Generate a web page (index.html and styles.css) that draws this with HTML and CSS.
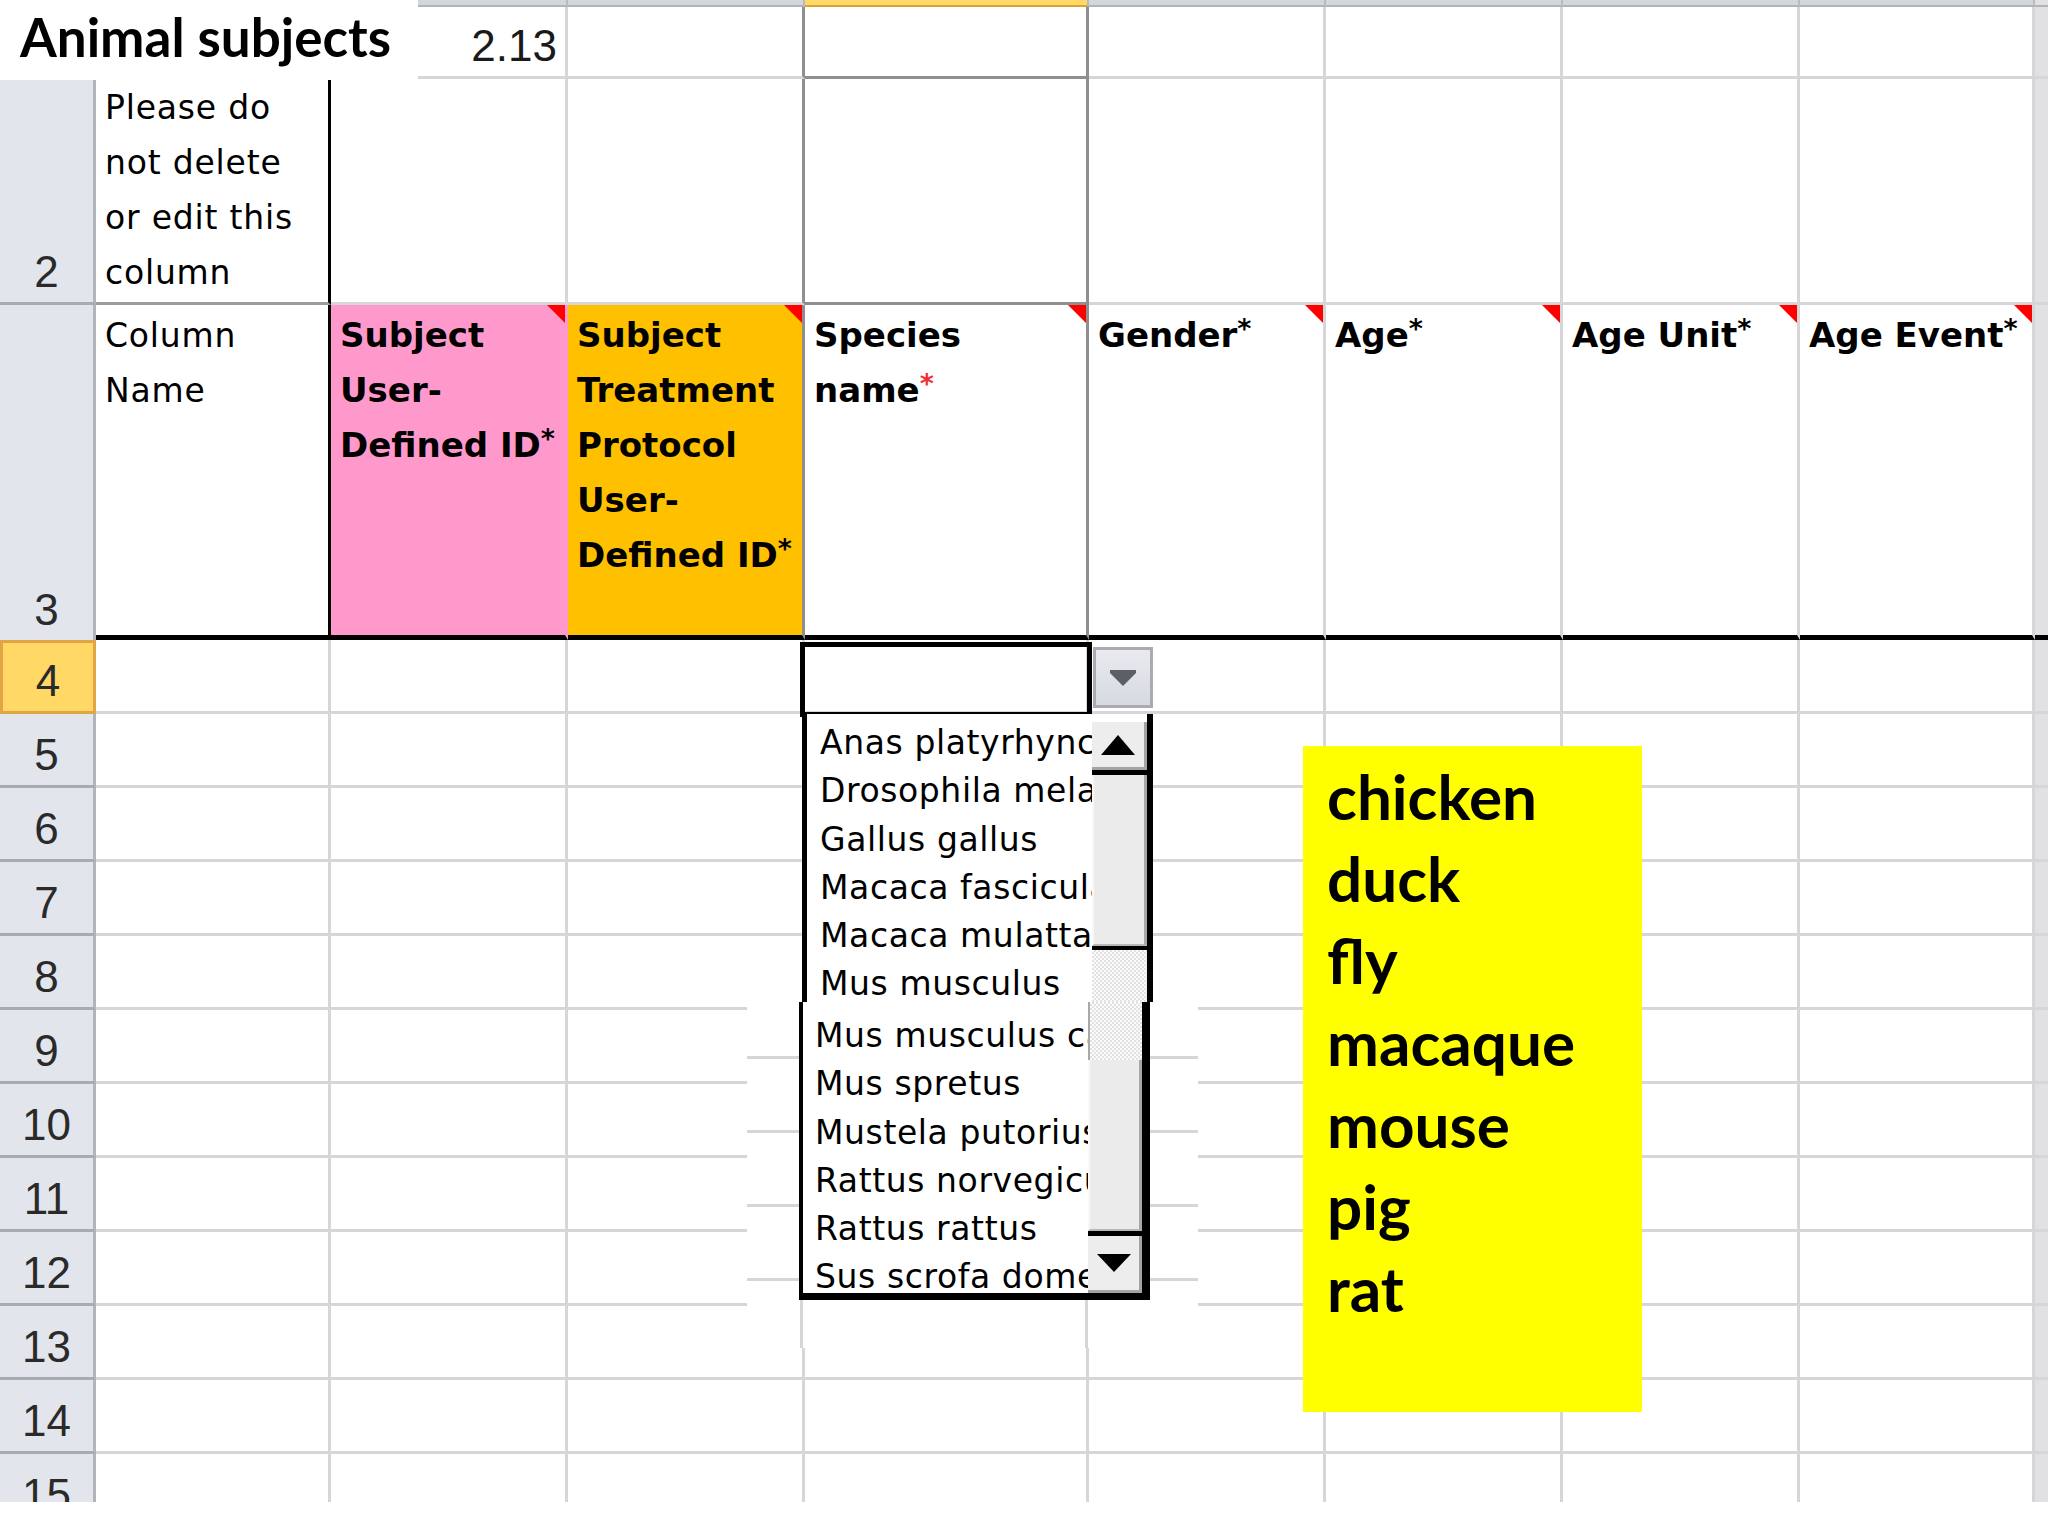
FILE: index.html
```html
<!DOCTYPE html>
<html lang="en">
<head>
    <meta charset="UTF-8">
    <title>Animal subjects</title>
    <link rel="stylesheet" href="styles.css">
</head>
<body>
    <div class="sheet">
        <!-- column letter strip (cut off at the top) -->
        <div class="row colbar">
            <div class="cb"></div><div class="cb"></div><div class="cb"></div><div class="cb"></div>
            <div class="cb sel"></div><div class="cb"></div><div class="cb"></div><div class="cb"></div>
            <div class="cb"></div><div class="cb edge"></div>
        </div>

        <div class="row r1">
            <div class="rh"></div>
            <div class="c"></div>
            <div class="c num">2.13</div>
            <div class="c cedge"></div>
            <div class="c dcol dtop"></div>
            <div class="c"></div><div class="c"></div><div class="c"></div><div class="c"></div>
            <div class="c edge"></div>
        </div>

        <div class="row r2">
            <div class="rh dk">2</div>
            <div class="c blk dk txt bottom">Please do<br>not delete<br>or edit this<br>column</div>
            <div class="c"></div>
            <div class="c cedge"></div>
            <div class="c dcol dtop"></div>
            <div class="c"></div><div class="c"></div><div class="c"></div><div class="c"></div>
            <div class="c edge"></div>
        </div>

        <div class="row r3">
            <div class="rh">3</div>
            <div class="c blk txt">Column<br>Name</div>
            <div class="c txt hd pink flag">Subject<br>User-<br>Defined ID<span class="ast">*</span></div>
            <div class="c txt hd orange cedge flag">Subject<br>Treatment<br>Protocol<br>User-<br>Defined ID<span class="ast">*</span></div>
            <div class="c txt hd dcol flag">Species<br>name<span class="ast red">*</span></div>
            <div class="c txt hd flag">Gender<span class="ast">*</span></div>
            <div class="c txt hd flag">Age<span class="ast">*</span></div>
            <div class="c txt hd flag">Age Unit<span class="ast">*</span></div>
            <div class="c txt hd flag">Age Event<span class="ast">*</span></div>
            <div class="c edge"></div>
        </div>

        <div class="row"><div class="rh on">4</div><div class="c"></div><div class="c"></div><div class="c"></div><div class="c"></div><div class="c"></div><div class="c"></div><div class="c"></div><div class="c"></div><div class="c edge"></div></div>
        <div class="row"><div class="rh">5</div><div class="c"></div><div class="c"></div><div class="c"></div><div class="c"></div><div class="c"></div><div class="c"></div><div class="c"></div><div class="c"></div><div class="c edge"></div></div>
        <div class="row"><div class="rh">6</div><div class="c"></div><div class="c"></div><div class="c"></div><div class="c"></div><div class="c"></div><div class="c"></div><div class="c"></div><div class="c"></div><div class="c edge"></div></div>
        <div class="row"><div class="rh">7</div><div class="c"></div><div class="c"></div><div class="c"></div><div class="c"></div><div class="c"></div><div class="c"></div><div class="c"></div><div class="c"></div><div class="c edge"></div></div>
        <div class="row"><div class="rh">8</div><div class="c"></div><div class="c"></div><div class="c"></div><div class="c"></div><div class="c"></div><div class="c"></div><div class="c"></div><div class="c"></div><div class="c edge"></div></div>
        <div class="row"><div class="rh">9</div><div class="c"></div><div class="c"></div><div class="c"></div><div class="c"></div><div class="c"></div><div class="c"></div><div class="c"></div><div class="c"></div><div class="c edge"></div></div>
        <div class="row"><div class="rh">10</div><div class="c"></div><div class="c"></div><div class="c"></div><div class="c"></div><div class="c"></div><div class="c"></div><div class="c"></div><div class="c"></div><div class="c edge"></div></div>
        <div class="row"><div class="rh">11</div><div class="c"></div><div class="c"></div><div class="c"></div><div class="c"></div><div class="c"></div><div class="c"></div><div class="c"></div><div class="c"></div><div class="c edge"></div></div>
        <div class="row"><div class="rh">12</div><div class="c"></div><div class="c"></div><div class="c"></div><div class="c"></div><div class="c"></div><div class="c"></div><div class="c"></div><div class="c"></div><div class="c edge"></div></div>
        <div class="row"><div class="rh">13</div><div class="c"></div><div class="c"></div><div class="c"></div><div class="c"></div><div class="c"></div><div class="c"></div><div class="c"></div><div class="c"></div><div class="c edge"></div></div>
        <div class="row"><div class="rh">14</div><div class="c"></div><div class="c"></div><div class="c"></div><div class="c"></div><div class="c"></div><div class="c"></div><div class="c"></div><div class="c"></div><div class="c edge"></div></div>
        <div class="row"><div class="rh">15</div><div class="c"></div><div class="c"></div><div class="c"></div><div class="c"></div><div class="c"></div><div class="c"></div><div class="c"></div><div class="c"></div><div class="c edge"></div></div>

        <!-- overlays -->
        <div class="title">Animal subjects</div>

        <div class="select-box"></div>
        <div class="dd-btn">
            <svg width="26" height="16" viewBox="0 0 26 16"><polygon points="0,0 26,0 26,3 13,16 0,3" fill="#5c5f66"/></svg>
        </div>

        <div class="patch"></div>

        <div class="list list-a">
            <div class="items">
                <div>Anas platyrhynchos</div>
                <div>Drosophila melanogaster</div>
                <div>Gallus gallus</div>
                <div>Macaca fascicularis</div>
                <div>Macaca mulatta</div>
                <div>Mus musculus</div>
            </div>
            <div class="sbar">
                <div class="sb-btn up">
                    <svg width="34" height="20" viewBox="0 0 34 20"><polygon points="0,20 17,0 34,20" fill="#000"/></svg>
                </div>
                <div class="sb-line"></div>
                <div class="sb-thumb tall"></div>
                <div class="sb-line thin"></div>
                <div class="sb-track"></div>
            </div>
        </div>

        <div class="list list-b">
            <div class="items">
                <div>Mus musculus castaneus</div>
                <div>Mus spretus</div>
                <div>Mustela putorius furo</div>
                <div>Rattus norvegicus</div>
                <div>Rattus rattus</div>
                <div>Sus scrofa domesticus</div>
            </div>
            <div class="sbar">
                <div class="sb-track short"></div>
                <div class="sb-thumb"></div>
                <div class="sb-line"></div>
                <div class="sb-btn down">
                    <svg width="34" height="18" viewBox="0 0 34 18"><polygon points="0,0 34,0 17,18" fill="#000"/></svg>
                </div>
            </div>
        </div>

        <div class="note">chicken<br>duck<br>fly<br>macaque<br>mouse<br>pig<br>rat</div>
    </div>
</body>
</html>
```

FILE: styles.css
```css
* {
    box-sizing: border-box;
}

body {
    margin: 0;
    background: #fff;
}

.sheet {
    position: relative;
    width: 2048px;
    height: 1502px;
    overflow: hidden;
    font-family: "DejaVu Sans", sans-serif;
    color: #000;
}

.row {
    display: grid;
    grid-template-columns: 96px 235px 237px 237px 284px 237px 237px 237px 235px 13px;
    height: 74px;
}

/* column letter strip */
.colbar {
    height: 7px;
}

.cb {
    background: #d3d6db;
    border-right: 2px solid #b8bbc1;
    border-bottom: 2px solid #b0b3b9;
}

.cb.sel {
    background: #ffd966;
    border-bottom-color: #dba23c;
}

.r1 { height: 72px; }
.r2 { height: 226px; }
.r3 { height: 335px; }

/* cells */
.c {
    position: relative;
    border-right: 3px solid #d6d6d9;
    border-bottom: 3px solid #d6d6d9;
}

.r3 .c {
    border-bottom: 5px solid #000;
}

.edge {
    background: #e1e1e4;
    border-right: none;
}

.c.edge {
    border-right: none;
}

.dcol { border-right-color: #8f8f8f; }
.dtop { border-bottom-color: #8f8f8f; }
.cedge { border-right-color: #8f8f8f; }
.blk { border-right: 3px solid #000; }
.dk { border-bottom-color: #9c9c9c; }

.pink {
    background: #ff99cc;
    border-right-color: transparent;
}

.orange {
    background: #ffc000;
}

/* row headers */
.rh {
    display: flex;
    align-items: flex-end;
    justify-content: center;
    padding-bottom: 5px;
    background: #e2e6ec;
    border-right: 3px solid #b1b4ba;
    border-bottom: 3px solid #a7abb2;
    font: 44px "Liberation Sans", sans-serif;
    color: #2a2a2a;
}

.r1 .rh { background: #fff; }
.r3 .rh { border-bottom: none; }

.rh.on {
    background: #ffd865;
    border: 3px solid #e1a545;
}

/* cell text */
.txt {
    padding: 3px 0 0 9px;
    font-size: 33px;
    line-height: 55px;
    letter-spacing: 0.8px;
    white-space: nowrap;
}

.txt.bottom {
    display: flex;
    flex-direction: column;
    justify-content: flex-end;
    padding-top: 0;
    padding-bottom: 2px;
}

.hd {
    font-weight: 700;
    font-size: 34px;
    letter-spacing: 0;
}

.ast {
    font-size: 27px;
    font-weight: 700;
    line-height: 0;
    vertical-align: 9px;
}

.ast.red { color: #f03030; }

.flag::after {
    content: "";
    position: absolute;
    top: 0;
    right: 0;
    border-top: 18px solid #ff0000;
    border-left: 18px solid transparent;
}

.num {
    display: flex;
    align-items: flex-end;
    justify-content: flex-end;
    padding: 0 8px 5px 0;
    font: 44px "Liberation Sans", sans-serif;
    color: #1a1a1a;
}

/* title block over the top-left corner */
.title {
    position: absolute;
    left: 0;
    top: 0;
    width: 418px;
    height: 80px;
    padding: 5px 0 0 20px;
    background: #fff;
    font: 700 53px/1.2 Lato, sans-serif;
    white-space: nowrap;
}

/* active cell + dropdown */
.select-box {
    position: absolute;
    left: 800px;
    top: 642px;
    width: 292px;
    height: 75px;
    border: 5px solid #000;
}

.dd-btn {
    position: absolute;
    left: 1093px;
    top: 647px;
    width: 60px;
    height: 61px;
    display: flex;
    align-items: center;
    justify-content: center;
    background: linear-gradient(#e8eaef, #d6dae1);
    border: 3px solid #a9abb0;
}

.patch {
    position: absolute;
    left: 747px;
    top: 1002px;
    width: 451px;
    height: 346px;
    background: repeating-linear-gradient(to bottom, #fff 0 54px, #d6d6d9 54px 57px, #fff 57px 74px);
}

.patch::before,
.patch::after {
    content: "";
    position: absolute;
    top: 298px;
    width: 3px;
    height: 48px;
    background: #d6d6d9;
}

.patch::before { left: 53px; }
.patch::after { left: 338px; }

.list {
    position: absolute;
    display: flex;
    background: #fff;
    border: 0 solid #000;
}

.list-a {
    left: 802px;
    top: 714px;
    width: 351px;
    height: 288px;
    border-left-width: 5px;
    border-right-width: 6px;
}

.list-b {
    left: 799px;
    top: 1002px;
    width: 351px;
    height: 298px;
    border-left-width: 4px;
    border-right-width: 8px;
    border-bottom-width: 7px;
}

.items {
    flex: 1;
    overflow: hidden;
    font-size: 33px;
    line-height: 48.3px;
    letter-spacing: 0.6px;
    white-space: nowrap;
}

.list-a .items { padding: 5px 0 0 13px; }
.list-b .items { padding: 10px 0 0 12px; }

.sbar {
    width: 55px;
    display: flex;
    flex-direction: column;
}

.list-a .sbar { padding-top: 8px; }
.list-b .sbar { width: 54px; }

.sb-btn {
    display: flex;
    align-items: center;
    justify-content: center;
    background: #ededed;
    border-right: 3px solid #a3a3a3;
    border-bottom: 3px solid #a3a3a3;
}

.sb-btn.up { height: 48px; }
.sb-btn.down { height: 57px; }

.sb-line {
    height: 5px;
    background: #000;
}

.sb-line.thin { height: 4px; }

.sb-thumb {
    height: 171px;
    background: #ebebeb;
    border-left: 2px solid #f8f8f8;
    border-right: 3px solid #a8a8a8;
    border-bottom: 2px solid #b8b8b8;
}

.sb-track {
    flex: 1;
    background: repeating-conic-gradient(#e2e2e2 0 25%, #fbfbfb 0 50%) 0 0 / 4px 4px;
}

.sb-track.short {
    flex: none;
    height: 58px;
    border-left: 2px solid #a8a8a8;
}

/* yellow note */
.note {
    position: absolute;
    left: 1303px;
    top: 746px;
    width: 339px;
    height: 666px;
    padding: 9px 0 0 24px;
    background: #ffff00;
    font: 700 62px/82px Lato, sans-serif;
}
```
